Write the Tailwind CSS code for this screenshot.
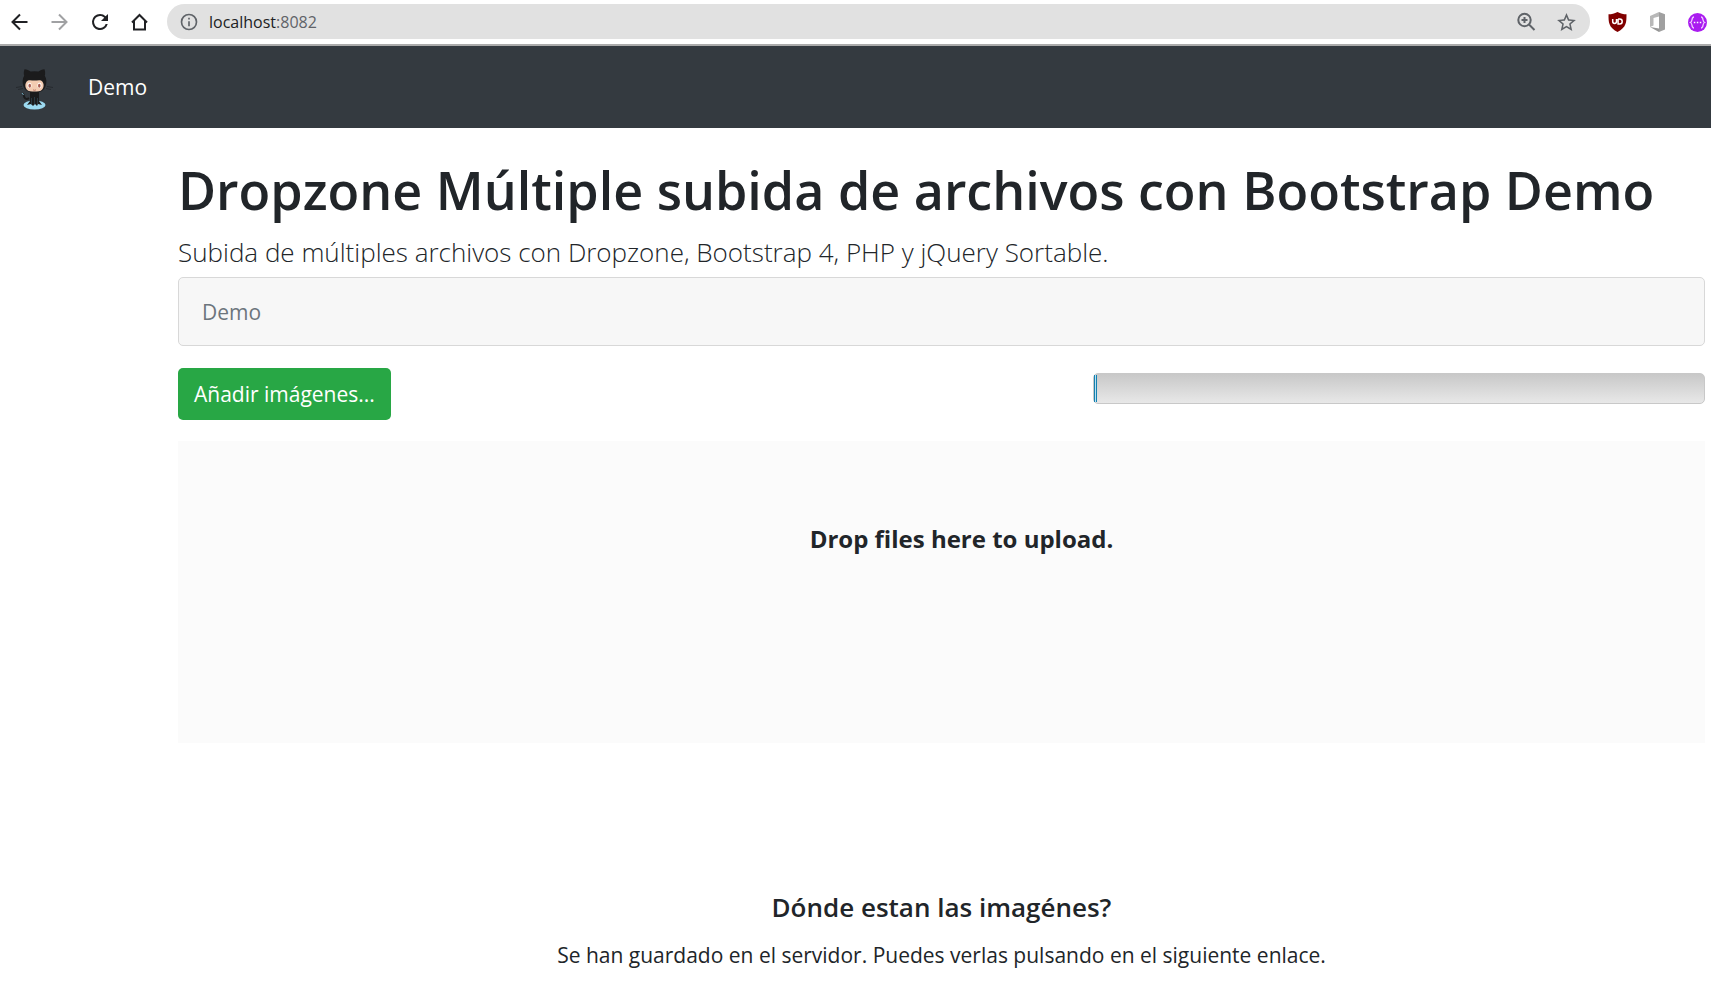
<!DOCTYPE html>
<html lang="es">
<head>
<meta charset="utf-8">
<title>Dropzone Demo</title>
<script src="https://cdn.jsdelivr.net/npm/@tailwindcss/browser@4"></script>
</head>
<body class="min-h-screen overflow-x-hidden bg-white font-['Open_Sans','Noto_Sans',sans-serif] text-[#212529]">
<div class="flex h-[46px] items-center border-b-2 border-[#ababab] bg-white pb-px">
  <div class="flex w-[167px] items-center gap-4 pl-2 text-[#202124]">
    <button aria-label="Atrás" class="size-6"><svg viewBox="0 0 24 24" class="size-6" fill="none" stroke="currentColor" stroke-width="2"><path d="M19.500 12H5M12 4.500L4.500 12l7.500 7.500"/></svg></button>
    <button aria-label="Adelante" class="size-6 text-[#a0a1a3]"><svg viewBox="0 0 24 24" class="size-6" fill="none" stroke="currentColor" stroke-width="2"><path d="M3.500 12H18M11 4.500l7.500 7.500-7.500 7.500"/></svg></button>
    <button aria-label="Recargar" class="size-6"><svg viewBox="0 0 24 24" class="size-6" fill="currentColor"><path d="M17.650 6.350A7.960 7.960 0 0 0 12 4a8 8 0 1 0 7.730 10h-2.080A6 6 0 1 1 12 6c1.660 0 3.140.69 4.220 1.780L13 11h7V4z"/></svg></button>
    <button aria-label="Inicio" class="size-6"><svg viewBox="0 0 24 24" class="size-6" fill="none" stroke="currentColor" stroke-width="2"><path d="M4 12.500L11.500 5l7.500 7.500M6 11v8.500h11V11"/></svg></button>
  </div>
  <div class="flex h-[35px] flex-1 items-center rounded-full bg-[#e1e1e1] px-3 text-[#5f6368]">
    <svg viewBox="0 0 24 24" class="size-5" fill="currentColor"><path d="M11 7h2v2h-2zm0 4h2v6h-2zm1-9a10 10 0 1 0 0 20 10 10 0 0 0 0-20zm0 18a8 8 0 1 1 0-16 8 8 0 0 1 0 16z"/></svg>
    <div role="textbox" aria-label="Dirección" contenteditable="true" class="ml-2.5 flex-1 text-[16px] leading-6"><span class="text-[#202124]">localhost</span><span>:8082</span></div>
    <button aria-label="Zoom" class="mr-4 size-6"><svg viewBox="0 0 24 24" class="size-6" fill="none" stroke="currentColor" stroke-width="2"><circle cx="10.500" cy="10" r="6.200"/><path d="M15 14.500L20.500 20M7.500 10h6M10.500 7v6"/></svg></button>
    <button aria-label="Añadir a marcadores" class="size-6"><svg viewBox="0 0 24 24" class="size-6" fill="currentColor"><path d="M22 9.240l-7.190-.62L12 2 9.190 8.630 2 9.240l5.460 4.730L5.820 21 12 17.270 18.180 21l-1.630-7.030L22 9.240zM12 15.400l-3.760 2.270 1-4.280-3.320-2.880 4.380-.38L12 6.100l1.710 4.040 4.380.38-3.320 2.880 1 4.280L12 15.400z" transform="translate(1.200 1.200) scale(.94)"/></svg></button>
  </div>
  <div class="flex items-center gap-5 pl-[17px] pr-1">
    <button aria-label="Bloqueador" class="size-5"><svg viewBox="0 0 20 20" class="size-5"><path fill="#800000" d="M10.500 0C7.500 1.700 4.500 2.300 1.500 2.300c0 8 0 13 9 17.700 9-4.700 9-9.700 9-17.700-3 0-6-.6-9-2.300z"/><path d="M5.700 7v2.500a1.900 1.900 0 0 0 3.800 0V7m1.600 0v5h1.600a2.500 2.500 0 0 0 0-5h-1.600" fill="none" stroke="#fff" stroke-width="1.500"/></svg></button>
    <button aria-label="Office" class="size-5"><svg viewBox="0 0 20 20" class="size-5"><path fill="#b8b8b8" d="M12 0L3 4v11l3.500-1.500V6L12 4.500z"/><path fill="#a0a0a0" d="M12 0l6 2.200v15.300L12 20z"/><path fill="#969696" d="M3 15l9 1.500V20z"/></svg></button>
    <button aria-label="Extensión" class="size-5"><svg viewBox="0 0 20 20" class="size-5"><circle cx="10.500" cy="10.500" r="9.500" fill="#aa1cf0"/><path d="M7 5C4 5 6 9.500 3.500 10.500 6 11.500 4 16 7 16M14 5c3 0 1 4.500 3.500 5.500-2.500 1-.5 5.500-3.500 5.500" fill="none" stroke="#efc8ff" stroke-width="1.300"/><path d="M6.800 9.700h1.500v1.500H6.800zm3 0h1.500v1.500H9.800zm3 0h1.500v1.500h-1.500z" fill="#fff"/></svg></button>
  </div>
</div>
<nav class="flex h-[82px] items-center bg-[#343a40] pl-3.5">
  <a href="#" aria-label="Inicio del sitio" class="block pt-1"><svg viewBox="0 0 42 42" class="size-[42px]">
    <ellipse cx="20.500" cy="37" rx="11" ry="4.600" fill="#9cdaf1"/>
    <path d="M15 30c-3 2.500-5 0-5.500-3.500l-1.500-1" fill="none" stroke="#1b1b1c" stroke-width="1.800"/><path d="M8 25l1.500 2" stroke="#7bb4cc"/>
    <path d="M16 24h9v9l3 4-4-1-1 2-2-2-2 2-2-2-4 1 3-4z" fill="#1b1b1c"/>
    <path d="M17.500 30v7M20.500 29v7M23.500 30v7" stroke="#3b5966" stroke-width=".5"/>
    <path d="M10.500 1.200c2.500 0 4.500 1.300 6 2.300a22 22 0 0 1 8 0c1.500-1 3.500-2.300 6-2.300 1 3 .7 5 .3 6.500 2 3 2 7 .8 10.300C30 23 26 24.500 20.500 24.500S11 23 9.400 18C8.200 14.500 8.300 10.500 10.200 7.700 9.700 6 9.500 4 10.500 1.200z" fill="#1b1b1c"/>
    <path d="M14 12.500c2-.8 4 0 6.500 0s4.500-.8 6.500 0c4 2 3.600 10-2 10.800-3 .4-6 .4-9 0-5.600-.8-6-8.800-2-10.800z" fill="#f3cbb1"/>
    <ellipse cx="15.500" cy="17.500" rx="2" ry="2.800" fill="#fff"/><ellipse cx="25.500" cy="17.500" rx="2" ry="2.800" fill="#fff"/>
    <ellipse cx="15.700" cy="17.700" rx="1.300" ry="2" fill="#a95c51"/><ellipse cx="25.300" cy="17.700" rx="1.300" ry="2" fill="#a95c51"/>
    <path d="M19 21.800q1.500 1 3 0" fill="none" stroke="#a95c51" stroke-width=".7"/>
    <path d="M2 19.500l6-1M4 21.500l5-1M39 19.500l-6-1M37 21.500l-5-1" stroke="#202326" stroke-width=".7"/>
  </svg></a>
  <a href="#" class="ml-8 text-[21px] leading-8 text-white">Demo</a>
</nav>
<main class="pl-[178px] pr-1.5">
  <h1 class="whitespace-nowrap pt-7 text-[52px] font-semibold leading-[68px]">Dropzone Múltiple subida de archivos con Bootstrap Demo</h1>
  <p class="pt-2 text-[26px] font-light leading-10">Subida de múltiples archivos con Dropzone, Bootstrap 4, PHP y jQuery Sortable.</p>
  <div class="mt-[5px] flex h-[69px] items-center rounded-[5px] border border-[#d8d8d8] bg-[#f7f7f7] px-[23px] text-[21px] leading-8 text-[#6c757d]">Demo</div>
  <div class="mt-[22px] flex items-start justify-between">
    <button class="h-[52px] rounded-[5px] bg-[#28a745] px-4 text-[21px] leading-8 text-white">Añadir imágenes...</button>
    <div role="progressbar" aria-label="Progreso" aria-valuenow="0" class="mt-[5px] h-[31px] w-[612px] rounded-[5px] border border-[#c8c8c8] bg-linear-to-b from-[#c8c8c8] to-[#e8e8e8]"><div class="mt-px h-[27px] w-[3px] border-x border-[#1481ae] bg-[#b9e0f5]"></div></div>
  </div>
  <section class="mt-[21px] h-[302px] bg-[#fbfbfb] pl-10 pt-20 text-center"><h2 class="text-[24px] font-bold leading-9">Drop files here to upload.</h2></section>
  <section class="pt-[144px] text-center">
    <h3 class="text-[26px] font-semibold leading-10">Dónde estan las imagénes?</h3>
    <p class="pt-3 text-[21px] leading-8">Se han guardado en el servidor. Puedes verlas pulsando en el siguiente enlace.</p>
  </section>
</main>
</body>
</html>
